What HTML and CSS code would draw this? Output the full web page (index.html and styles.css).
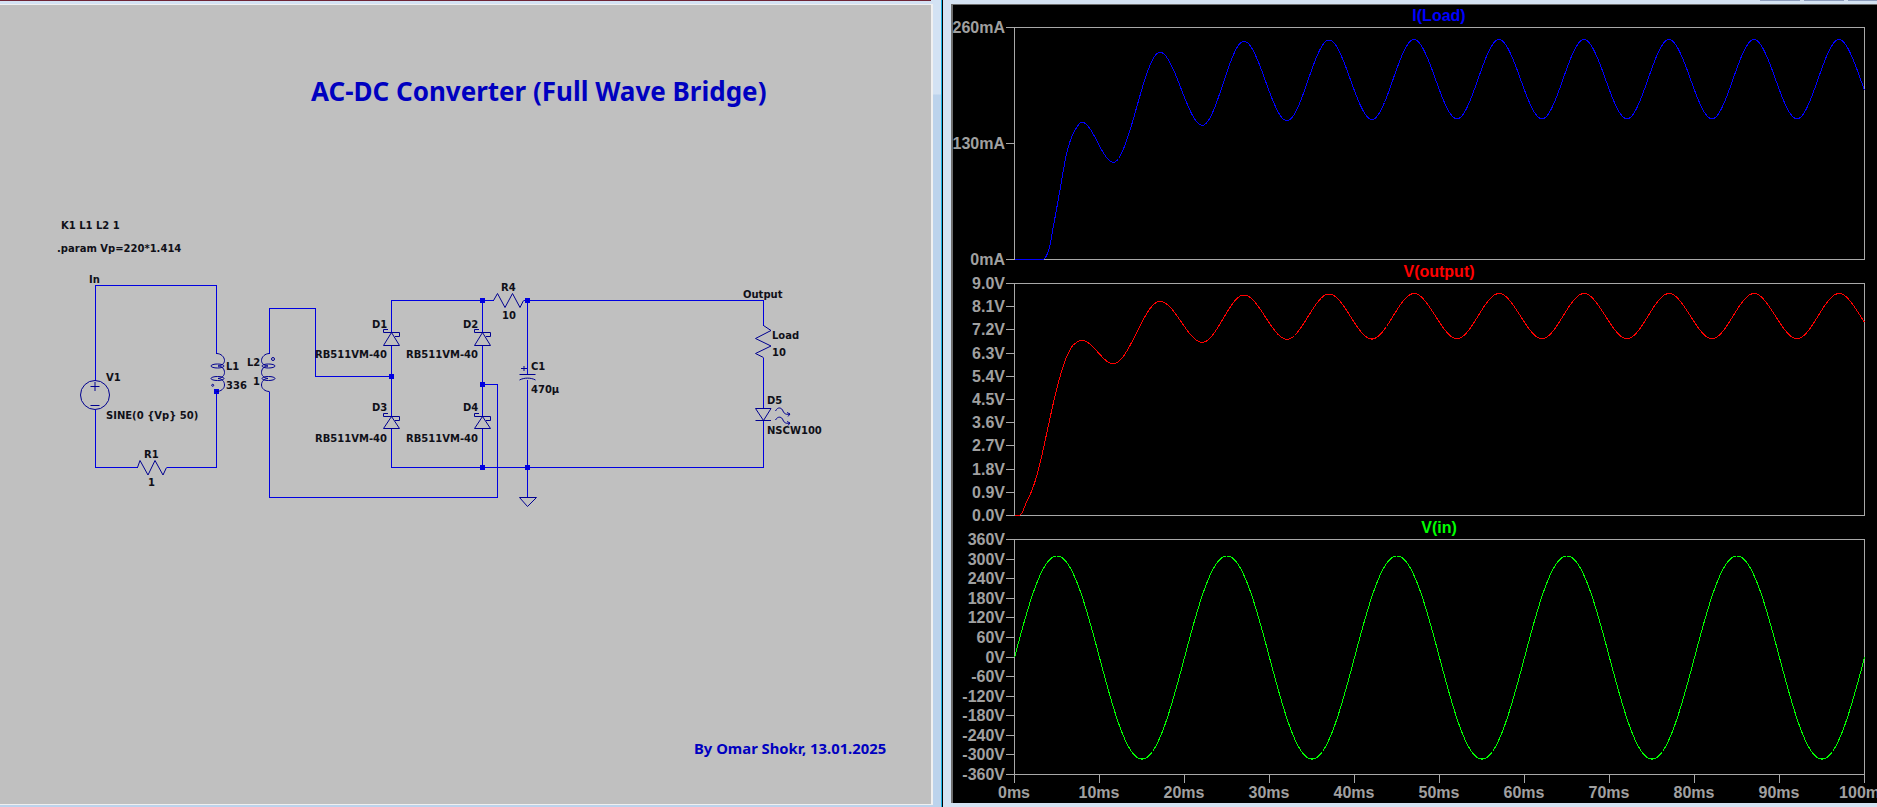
FILE: index.html
```html
<!DOCTYPE html>
<html lang="en">
<head>
    <meta charset="UTF-8">
    <title>AC-DC Converter</title>
    <link rel="stylesheet" href="styles.css">
</head>
<body>
    <div class="desk">
        <div class="win-left">
            <div class="win-left-top"></div>
            <div class="win-left-body">
                <svg class="schematic" width="931" height="799" viewBox="0 5 931 799">
                    <text class="title" x="311" y="101">AC-DC Converter (Full Wave Bridge)</text>
                    <text class="credit" x="694" y="754">By Omar Shokr, 13.01.2025</text>

                    <!-- wires -->
                    <path class="wire" d="M95.5 380.5V285.5H216.5V353.5M216.5 391.5V467.5H166.5M137.5 467.5H95.5V409.5"/>
                    <path class="wire" d="M269.5 353.5V308.5H315.5V376.5H391.5M269.5 391.5V497.5H497.5V384.5H482.5"/>
                    <path class="wire" d="M493.5 300.5H391.5V332.5M391.5 345.5V416.5M391.5 428.5V467.5H763.5V420.5"/>
                    <path class="wire" d="M482.5 300.5V332.5M482.5 345.5V416.5M482.5 428.5V467.5"/>
                    <path class="wire" d="M523.5 300.5H763.5V325.5M763.5 357.5V408.5"/>
                    <path class="wire" d="M527.5 300.5V374.5M527.5 379.5V497.5"/>

                    <!-- junctions -->
                    <rect class="dot" x="214" y="389" width="5" height="5"/>
                    <rect class="dot" x="389" y="374" width="5" height="5"/>
                    <rect class="dot" x="480" y="298" width="5" height="5"/>
                    <rect class="dot" x="480" y="382" width="5" height="5"/>
                    <rect class="dot" x="480" y="465" width="5" height="5"/>
                    <rect class="dot" x="525" y="298" width="5" height="5"/>
                    <rect class="dot" x="525" y="465" width="5" height="5"/>

                    <!-- V1 -->
                    <circle class="part" cx="95" cy="395" r="14.5"/>
                    <path class="part" d="M90.5 386.5H99.5M95 382V391M90.5 405.5H99.5"/>

                    <!-- R1, R4, Load -->
                    <path class="part" d="M137.5 467.5L140 460.5L148 475L155 460.5L163 475L166.5 467.5"/>
                    <path class="part" d="M493.5 300.5L497.5 293.5L505 307.5L512.5 293.5L520 307.5L523.5 300.5"/>
                    <path class="part" d="M763.5 325.5L771 330.5L755.5 338.5L771 346L755.5 353.5L763.5 357.5"/>

                    <!-- L1 -->
                    <path class="part" d="M216.5 353.5C221 353.5 224.5 357 224.5 360.5C224.5 363.5 222 365.5 218 366C222 366 224.5 369 224.5 372.5C224.5 375.5 222 378 218 378.5C222 378.5 224.5 381.5 224.5 385C224.5 388.5 221 391.5 216.5 391.5"/>
                    <ellipse class="part" cx="217.5" cy="366" rx="6.5" ry="2"/>
                    <ellipse class="part" cx="217.5" cy="378.5" rx="6.5" ry="2"/>
                    <circle class="part" cx="212.7" cy="385.3" r="1"/>

                    <!-- L2 -->
                    <path class="part" d="M269.5 353.5C265 353.5 261.5 357 261.5 360.5C261.5 363.5 264 365.5 268 366C264 366 261.5 369 261.5 372.5C261.5 375.5 264 378 268 378.5C264 378.5 261.5 381.5 261.5 385C261.5 388.5 265 391.5 269.5 391.5"/>
                    <ellipse class="part" cx="268.5" cy="366" rx="6.5" ry="2"/>
                    <ellipse class="part" cx="268.5" cy="378.5" rx="6.5" ry="2"/>
                    <circle class="part" cx="273" cy="359" r="1.5"/>

                    <!-- D1..D4 -->
                    <path class="part" d="M391.5 332.5L399.5 345.5H383.5ZM383.5 332.5H399.5V336.5H395M383.5 332.5V329.5H388"/>
                    <path class="part" d="M482.5 332.5L490.5 345.5H474.5ZM474.5 332.5H490.5V336.5H486M474.5 332.5V329.5H479"/>
                    <path class="part" d="M391.5 416.5L399.5 428.5H383.5ZM383.5 416.5H399.5V420.5H395M383.5 416.5V413.5H388"/>
                    <path class="part" d="M482.5 416.5L490.5 428.5H474.5ZM474.5 416.5H490.5V420.5H486M474.5 416.5V413.5H479"/>

                    <!-- C1 -->
                    <path class="part" d="M519.5 374.5H535.5M519.5 380C524 377.5 531 377.5 535.5 380M521 368.5H527M524 366V371"/>

                    <!-- ground -->
                    <path class="part" d="M519.5 497.5H536.5L527.5 506.5Z"/>

                    <!-- D5 -->
                    <path class="part" d="M755.5 408.5H771L763.5 420.5ZM755.5 420.5H771"/>
                    <path class="part" d="M775.5 411C778 406 782 408 783 411C784 414 787 415 790 414M787 412.5L790 414L788 416.5"/>
                    <path class="part" d="M775.5 420C778 415.5 782 417 783 420C784 423 787 424 790 423M787 421.5L790 423L788 425.5"/>

                    <!-- labels -->
                    <text class="lbl" x="61" y="229">K1 L1 L2 1</text>
                    <text class="lbl" x="57" y="252">.param Vp=220*1.414</text>
                    <text class="lbl" x="89" y="283">In</text>
                    <text class="lbl" x="106" y="381">V1</text>
                    <text class="lbl" x="106" y="419">SINE(0 {Vp} 50)</text>
                    <text class="lbl" x="144" y="458">R1</text>
                    <text class="lbl" x="148" y="486">1</text>
                    <text class="lbl" x="226" y="370">L1</text>
                    <text class="lbl" x="226" y="389">336</text>
                    <text class="lbl" x="247" y="366">L2</text>
                    <text class="lbl" x="253" y="385">1</text>
                    <text class="lbl" x="372" y="328">D1</text>
                    <text class="lbl" x="315" y="358">RB511VM-40</text>
                    <text class="lbl" x="463" y="328">D2</text>
                    <text class="lbl" x="406" y="358">RB511VM-40</text>
                    <text class="lbl" x="372" y="411">D3</text>
                    <text class="lbl" x="315" y="442">RB511VM-40</text>
                    <text class="lbl" x="463" y="411">D4</text>
                    <text class="lbl" x="406" y="442">RB511VM-40</text>
                    <text class="lbl" x="501" y="291">R4</text>
                    <text class="lbl" x="502" y="319">10</text>
                    <text class="lbl" x="743" y="298">Output</text>
                    <text class="lbl" x="772" y="339">Load</text>
                    <text class="lbl" x="772" y="356">10</text>
                    <text class="lbl" x="531" y="370">C1</text>
                    <text class="lbl" x="531" y="393">470µ</text>
                    <text class="lbl" x="767" y="404">D5</text>
                    <text class="lbl" x="767" y="434">NSCW100</text>
                </svg>
            </div>
        </div>

        <div class="win-right">
            <div class="tabs">
                <div class="tab"></div>
                <div class="tab"></div>
                <div class="tab tab-last"></div>
            </div>
            <div class="plot-wrap">
                <svg class="plot" width="924" height="798" viewBox="953 5 924 798">
                    <path class="axis" d="M1006 27.5H1864.5V259.5H1006M1014.5 27.5V259.5M1006 143.5H1014.5"/>
                    <text class="trace-name t-blue" x="1439" y="21">I(Load)</text>
                    <text class="tick-y" x="1005" y="33">260mA</text>
                    <text class="tick-y" x="1005" y="149">130mA</text>
                    <text class="tick-y" x="1005" y="265">0mA</text>
                    <polyline id="trace-load" class="trace t-blue-line"/>

                    <path class="axis" d="M1006 283.5H1864.5V515.5H1006M1014.5 283.5V515.5M1006 306.5H1014.5M1006 329.5H1014.5M1006 353.5H1014.5M1006 376.5H1014.5M1006 399.5H1014.5M1006 422.5H1014.5M1006 445.5H1014.5M1006 469.5H1014.5M1006 492.5H1014.5"/>
                    <text class="trace-name t-red" x="1439" y="277">V(output)</text>
                    <text class="tick-y" x="1005" y="289">9.0V</text>
                    <text class="tick-y" x="1005" y="312">8.1V</text>
                    <text class="tick-y" x="1005" y="335">7.2V</text>
                    <text class="tick-y" x="1005" y="359">6.3V</text>
                    <text class="tick-y" x="1005" y="382">5.4V</text>
                    <text class="tick-y" x="1005" y="405">4.5V</text>
                    <text class="tick-y" x="1005" y="428">3.6V</text>
                    <text class="tick-y" x="1005" y="451">2.7V</text>
                    <text class="tick-y" x="1005" y="475">1.8V</text>
                    <text class="tick-y" x="1005" y="498">0.9V</text>
                    <text class="tick-y" x="1005" y="521">0.0V</text>
                    <polyline id="trace-output" class="trace t-red-line"/>

                    <path class="axis" d="M1006 539.5H1864.5V783M1006 774.5H1864.5M1014.5 539.5V783M1006 559.5H1014.5M1006 578.5H1014.5M1006 598.5H1014.5M1006 617.5H1014.5M1006 637.5H1014.5M1006 657.5H1014.5M1006 676.5H1014.5M1006 696.5H1014.5M1006 715.5H1014.5M1006 735.5H1014.5M1006 754.5H1014.5M1099.5 774.5V783M1184.5 774.5V783M1269.5 774.5V783M1354.5 774.5V783M1439.5 774.5V783M1524.5 774.5V783M1609.5 774.5V783M1694.5 774.5V783M1779.5 774.5V783"/>
                    <text class="trace-name t-green" x="1439" y="533">V(in)</text>
                    <text class="tick-y" x="1005" y="545">360V</text>
                    <text class="tick-y" x="1005" y="565">300V</text>
                    <text class="tick-y" x="1005" y="584">240V</text>
                    <text class="tick-y" x="1005" y="604">180V</text>
                    <text class="tick-y" x="1005" y="623">120V</text>
                    <text class="tick-y" x="1005" y="643">60V</text>
                    <text class="tick-y" x="1005" y="663">0V</text>
                    <text class="tick-y" x="1005" y="682">-60V</text>
                    <text class="tick-y" x="1005" y="702">-120V</text>
                    <text class="tick-y" x="1005" y="721">-180V</text>
                    <text class="tick-y" x="1005" y="741">-240V</text>
                    <text class="tick-y" x="1005" y="760">-300V</text>
                    <text class="tick-y" x="1005" y="780">-360V</text>
                    <polyline id="trace-in" class="trace t-green-line"/>

                    <text class="tick-x" x="1014" y="798">0ms</text>
                    <text class="tick-x" x="1099" y="798">10ms</text>
                    <text class="tick-x" x="1184" y="798">20ms</text>
                    <text class="tick-x" x="1269" y="798">30ms</text>
                    <text class="tick-x" x="1354" y="798">40ms</text>
                    <text class="tick-x" x="1439" y="798">50ms</text>
                    <text class="tick-x" x="1524" y="798">60ms</text>
                    <text class="tick-x" x="1609" y="798">70ms</text>
                    <text class="tick-x" x="1694" y="798">80ms</text>
                    <text class="tick-x" x="1779" y="798">90ms</text>
                    <text class="tick-x" x="1864" y="798">100ms</text>
                </svg>
            </div>
            <div class="win-right-bottom"></div>
        </div>
    </div>
    <script src="plots.js"></script>
</body>
</html>
```

FILE: styles.css
```css
html, body {
    margin: 0;
    height: 100%;
    overflow: hidden;
    background-color: #d4e2f2;
}
svg {
    display: block;
}
.desk {
    display: flex;
    height: 807px;
}
.win-left {
    width: 941px;
    display: flex;
    flex-direction: column;
    background: linear-gradient(#d3e2f3 0, #d3e2f3 94px, #bcd3ec 95px);
    border-right: 1px solid #18b6e8;
}
.win-left-top {
    height: 1px;
    margin-bottom: 3px;
    width: 931px;
    background-color: #6e2436;
}
.win-left-body {
    width: 931px;
    height: 799px;
    background-color: #c0c0c0;
    border-top: 1px solid #f0f0f0;
    border-right: 2px solid #f0f0f0;
    border-bottom: 1px solid #f0f0f0;
}
.schematic {
    background-color: #c0c0c0;
}
.win-right {
    flex: 1;
    display: flex;
    flex-direction: column;
    border-left: 1px solid #000;
    background-color: #d4e2f2;
    padding-left: 8px;
}
.tabs {
    height: 4px;
    display: flex;
    justify-content: flex-end;
    gap: 4px;
}
.tab {
    width: 40px;
    height: 1px;
    background-color: #8c9cbc;
}
.tab-last {
    width: 29px;
}
.plot-wrap {
    border-top: 1px solid #6e6e6e;
    border-left: 2px solid #6e6e6e;
    background-color: #000;
}
.plot {
    background-color: #000;
}
.win-right-bottom {
    flex: 1;
}

/* schematic */
.wire {
    fill: none;
    stroke: #0000e0;
    stroke-width: 1;
    shape-rendering: crispEdges;
}
.part {
    fill: none;
    stroke: #000090;
    stroke-width: 1;
}
.dot {
    fill: #0000e0;
}
.lbl {
    font-family: "DejaVu Sans", sans-serif;
    font-weight: bold;
    font-size: 10px;
    fill: #101018;
}
.title {
    font-family: "Noto Sans", sans-serif;
    font-weight: bold;
    font-size: 26px;
    fill: #0000c0;
}
.credit {
    font-family: "Noto Sans", sans-serif;
    font-weight: bold;
    font-size: 14.8px;
    fill: #0000c0;
}

/* waveforms */
.axis {
    fill: none;
    stroke: #a8a8a8;
    stroke-width: 1;
    shape-rendering: crispEdges;
}
.trace {
    fill: none;
    stroke-width: 1;
    shape-rendering: crispEdges;
}
.t-blue-line { stroke: #0000ff; }
.t-red-line { stroke: #ff0000; }
.t-green-line { stroke: #00ff00; }
.tick-y, .tick-x, .trace-name {
    font-family: "Liberation Sans", sans-serif;
    font-weight: bold;
    font-size: 16px;
}
.tick-y {
    fill: #a0a0a0;
    text-anchor: end;
}
.tick-x {
    fill: #a0a0a0;
    text-anchor: middle;
}
.trace-name {
    text-anchor: middle;
}
.t-blue { fill: #0000ff; }
.t-red { fill: #ff0000; }
.t-green { fill: #00ff00; }
```

FILE: plots.js
```js
// monotone cubic through measured points, so the extremes stay flat
function pchip(pts) {
    const n = pts.length;
    const d = [];
    for (let i = 0; i < n - 1; i++) {
        d.push((pts[i + 1][1] - pts[i][1]) / (pts[i + 1][0] - pts[i][0]));
    }
    const m = [0];
    for (let i = 1; i < n - 1; i++) {
        m.push(d[i - 1] * d[i] <= 0 ? 0 : 2 * d[i - 1] * d[i] / (d[i - 1] + d[i]));
    }
    m.push(0);
    return function (x) {
        let i = 0;
        while (i < n - 2 && x > pts[i + 1][0]) i++;
        const h = pts[i + 1][0] - pts[i][0];
        const t = (x - pts[i][0]) / h;
        const a = 2 * t * t * t - 3 * t * t + 1;
        const b = t * t * t - 2 * t * t + t;
        const c = -2 * t * t * t + 3 * t * t;
        const e = t * t * t - t * t;
        return a * pts[i][1] + b * h * m[i] + c * pts[i + 1][1] + e * h * m[i + 1];
    };
}

function draw(id, fn) {
    const out = [];
    for (let x = 1014.5; x <= 1864.5; x += 1) {
        out.push(x + ',' + fn(x).toFixed(1));
    }
    document.getElementById(id).setAttribute('points', out.join(' '));
}

// the ripple repeats every 85px (10ms)
function ripple(start, firstPeak, peaks, mins) {
    const pts = start.slice();
    let k = 0;
    for (let x = firstPeak; x < 1900; x += 85) {
        pts.push([x, peaks[Math.min(k, peaks.length - 1)]]);
        pts.push([x + 43, mins[Math.min(k, mins.length - 1)]]);
        k++;
    }
    return pchip(pts);
}

draw('trace-load', ripple(
    [[1014.5, 259.5], [1043, 259.5], [1048.3, 251.7], [1053.3, 226.7], [1060, 190],
     [1066.7, 153.3], [1073.3, 133.3], [1082, 122.3], [1113.3, 162.3], [1160, 52.3], [1202.3, 125.3]],
    1244, [41.3, 40, 39.5], [120.7, 119.5, 118.9]
));

draw('trace-output', ripple(
    [[1014.5, 515.5], [1020, 515], [1026.7, 501.7], [1033.3, 486.7], [1040, 463.3], [1046.7, 433.3],
     [1053.3, 403.3], [1060, 376.7], [1066.7, 356.7], [1073.3, 345], [1082, 340.3],
     [1113.3, 363.7], [1160, 301.3], [1202.3, 342.3]],
    1244, [295, 294, 293.5], [339.3, 339, 338.7]
));

// V(in) = 311V sine at 50Hz
draw('trace-in', function (x) {
    const ms = (x - 1014.5) / 8.5;
    return 657.5 - 311 / 360 * 117.5 * Math.sin(2 * Math.PI * ms / 20);
});
```
